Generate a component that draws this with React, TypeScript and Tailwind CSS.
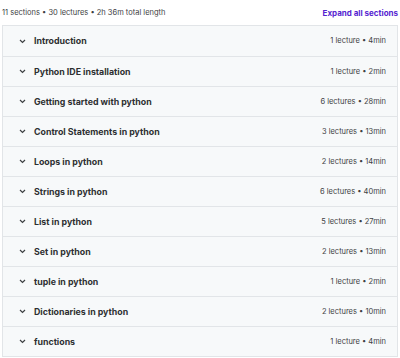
import React from 'react';

const sections = [
  { title: 'Introduction', meta: '1 lecture • 4min' },
  { title: 'Python IDE installation', meta: '1 lecture • 2min' },
  { title: 'Getting started with python', meta: '6 lectures • 28min' },
  { title: 'Control Statements in python', meta: '3 lectures • 13min' },
  { title: 'Loops in python', meta: '2 lectures • 14min' },
  { title: 'Strings in python', meta: '6 lectures • 40min' },
  { title: 'List in python', meta: '5 lectures • 27min' },
  { title: 'Set in python', meta: '2 lectures • 13min' },
  { title: 'tuple in python', meta: '1 lecture • 2min' },
  { title: 'Dictionaries in python', meta: '2 lectures • 10min' },
  { title: 'functions', meta: '1 lecture • 4min' },
];

const Chevron = () => (
  <svg width="7" height="5" viewBox="0 0 7 5" className="shrink-0">
    <path d="M1 1l2.5 2.5L6 1" fill="none" stroke="#3e4143" strokeWidth="1.2" />
  </svg>
);

export default function App() {
  return (
    <div className="w-[400px] h-[358px] bg-white text-[#2d2f31] font-['Inter',sans-serif] px-[2px]">
      <div className="flex items-center justify-between h-[25px]">
        <span className="text-[7.5px] text-[#3e4143]">11 sections • 30 lectures • 2h 36m total length</span>
        <span className="text-[8px] font-bold text-[#5624d0]">Expand all sections</span>
      </div>
      <div className="border border-[#e2e5e8]">
        {sections.map((s, i) => (
          <div
            key={i}
            className={`flex items-center h-[30px] bg-[#f7f9fa] pl-[16px] pr-[11px] ${i > 0 ? 'border-t border-[#e2e5e8]' : ''}`}
          >
            <Chevron />
            <span className="ml-[8px] text-[8.8px] font-bold flex-1 text-[#2d2f31]">{s.title}</span>
            <span className="text-[7.5px] text-[#3e4143]">{s.meta}</span>
          </div>
        ))}
      </div>
    </div>
  );
}
